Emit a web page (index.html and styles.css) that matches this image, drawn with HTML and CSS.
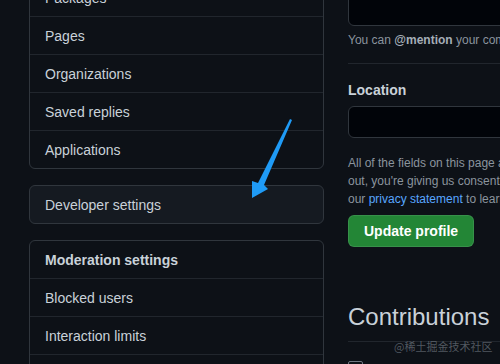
FILE: index.html
```html
<!DOCTYPE html>
<html lang="en">
<head>
  <meta charset="UTF-8">
  <meta name="viewport" content="width=device-width, initial-scale=1.0">
  <title>Public profile - Settings</title>
  <link rel="stylesheet" href="styles.css">
</head>
<body>
  <div class="layout">
    <!-- Settings sidebar -->
    <aside class="sidebar">
      <nav class="menu">
        <a class="menu-item" href="#">Packages</a>
        <a class="menu-item" href="#">Pages</a>
        <a class="menu-item" href="#">Organizations</a>
        <a class="menu-item" href="#">Saved replies</a>
        <a class="menu-item" href="#">Applications</a>
      </nav>
      <nav class="menu menu-dev">
        <a class="menu-item" href="#">Developer settings</a>
      </nav>
      <nav class="menu">
        <div class="menu-item menu-heading">Moderation settings</div>
        <a class="menu-item" href="#">Blocked users</a>
        <a class="menu-item" href="#">Interaction limits</a>
        <div class="menu-item menu-more"></div>
      </nav>
    </aside>

    <!-- Profile form -->
    <main class="content">
      <textarea class="field field-area"></textarea>
      <p class="note">You can <strong>@mention</strong> your company's GitHub organization to link it.</p>
      <hr class="divider">

      <label class="label" for="location">Location</label>
      <input class="field" id="location" type="text">

      <p class="note note-block">
        All of the fields on this page are optional and can be deleted at any time, and by filling them<br>
        out, you're giving us consent to share this data wherever your user profile appears. Please see<br>
        our <a class="link" href="#">privacy statement</a> to learn more about how we use this information.
      </p>

      <button class="btn-primary" type="button">Update profile</button>

      <h2 class="subhead">Contributions</h2>
      <div class="checkbox"></div>
    </main>
  </div>

  <svg class="arrow" width="500" height="364" viewBox="0 0 500 364">
    <polygon points="290,119 292,120 264,185 268,189 252,198 252,181 258,183" fill="#1f9bf6"/>
  </svg>

  <div class="watermark">@稀土掘金技术社区</div>
</body>
</html>
```

FILE: styles.css
```css
html, body {
  overflow: hidden;
}

body {
  margin: 0;
  background-color: #0d1117;
  color: #c9d1d9;
  font-family: "Liberation Sans", Arial, sans-serif;
  font-size: 14px;
}

.layout {
  display: flex;
  align-items: flex-start;
  gap: 24px;
  padding-left: 29px;
}

/* sidebar */
.sidebar {
  width: 295px;
  flex-shrink: 0;
  margin-top: -22px;
  display: flex;
  flex-direction: column;
  gap: 16px;
}

.menu {
  display: flex;
  flex-direction: column;
  border: 1px solid #30363d;
  border-radius: 6px;
  overflow: hidden;
}

.menu-dev {
  background-color: #151a21;
}

.menu-item {
  display: block;
  padding: 9px 15px 7px;
  line-height: 21px;
  color: #c9d1d9;
  text-decoration: none;
  border-top: 1px solid #21262d;
}

.menu-item:first-child {
  border-top: none;
}

.menu-heading {
  font-weight: bold;
}

.menu-more {
  height: 21px;
}

/* main content */
.content {
  width: 460px;
  flex-shrink: 0;
  margin-top: -34px;
  display: flex;
  flex-direction: column;
  align-items: flex-start;
}

.field {
  box-sizing: border-box;
  width: 100%;
  height: 32px;
  margin: 0;
  background-color: #010409;
  border: 1px solid #30363d;
  border-radius: 6px;
  color: #c9d1d9;
  font: inherit;
}

.field-area {
  height: 60px;
  resize: none;
}

.note {
  margin: 5px 0 0;
  font-size: 12px;
  line-height: 18px;
  color: #8b949e;
  white-space: nowrap;
}

.note strong {
  color: #a5aeb8;
}

.divider {
  width: 100%;
  margin: 14px 0 0;
  border: none;
  border-top: 1px solid #21262d;
}

.label {
  margin-top: 16px;
  font-weight: bold;
  line-height: 20px;
}

#location {
  margin-top: 6px;
}

.note-block {
  margin-top: 16px;
}

.link {
  color: #58a6ff;
  text-decoration: none;
}

.btn-primary {
  margin-top: 7px;
  height: 32px;
  padding: 0 15px;
  background-color: #238636;
  border: 1px solid rgba(240, 246, 252, 0.1);
  border-radius: 6px;
  color: #fff;
  font-family: inherit;
  font-size: 14px;
  font-weight: bold;
}

.subhead {
  width: 100%;
  margin: 52px 0 0;
  padding-bottom: 6px;
  border-bottom: 1px solid #21262d;
  font-size: 24px;
  font-weight: normal;
  line-height: 36px;
}

.checkbox {
  margin-top: 19px;
  width: 13px;
  height: 13px;
  border: 1px solid #6e7681;
  border-radius: 2px;
}

/* overlays */
.arrow {
  position: absolute;
  left: 0;
  top: 0;
  pointer-events: none;
}

.watermark {
  position: absolute;
  left: 394px;
  top: 339px;
  font-family: "Noto Sans CJK SC", sans-serif;
  font-size: 11px;
  line-height: 14px;
  color: rgba(139, 148, 158, 0.55);
}
```
